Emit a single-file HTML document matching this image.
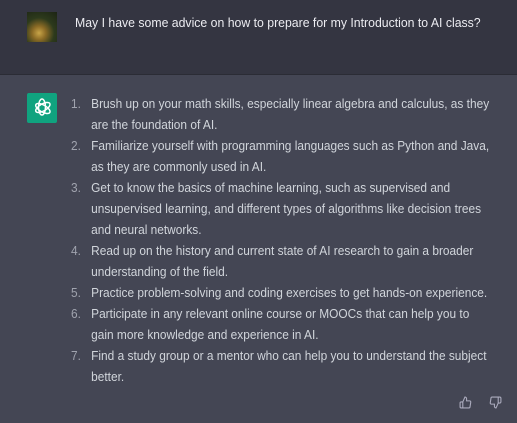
<!DOCTYPE html>
<html><head><meta charset="utf-8"><style>
html,body{margin:0;padding:0;width:517px;height:423px;overflow:hidden;font-family:"Liberation Sans",sans-serif;}
.top{position:absolute;left:0;top:0;width:517px;height:74px;background:#343541;border-bottom:1px solid #2b2c35;}
.bot{position:absolute;left:0;top:75px;width:517px;height:348px;background:#444654;}
.av{position:absolute;left:27px;top:12px;width:30px;height:30px;background:radial-gradient(circle at 40% 70%,#c9a548 0,#8a6a25 25%,#2d3a1c 55%,#1c2414 100%);}
.q{position:absolute;left:75px;top:13px;color:#ececf1;font-size:13.2px;line-height:20px;white-space:nowrap;transform:scaleX(0.93);transform-origin:0 0;}
.logo{position:absolute;left:27px;top:93px;width:30px;height:30px;background:#10a37f;border-radius:2px;}
.list{position:absolute;left:71px;top:93px;color:#d1d5db;font-size:13px;line-height:21px;transform:scaleX(0.915);transform-origin:0 0;}
.it{position:relative;padding-left:22px;white-space:nowrap;}
.it b{position:absolute;left:0;font-weight:normal;color:#a0a3ae;}
.ic{position:absolute;top:396px;}
</style></head><body>
<div class="top"></div>
<div class="av"></div>
<div class="q">May I have some advice on how to prepare for my Introduction to AI class?</div>
<div class="bot"></div>
<div class="logo"><svg width="30" height="30" viewBox="0 0 30 30" fill="none" stroke="#fff" stroke-width="1.5"><g transform="translate(15 15)"><ellipse rx="3.5" ry="8" transform="rotate(0) translate(0 -1)"/><ellipse rx="3.5" ry="8" transform="rotate(60) translate(0 -1)"/><ellipse rx="3.5" ry="8" transform="rotate(120) translate(0 -1)"/></g></svg></div>
<div class="list">
<div class="it"><b>1.</b>Brush up on your math skills, especially linear algebra and calculus, as they<br>are the foundation of AI.</div>
<div class="it"><b>2.</b>Familiarize yourself with programming languages such as Python and Java,<br>as they are commonly used in AI.</div>
<div class="it"><b>3.</b>Get to know the basics of machine learning, such as supervised and<br>unsupervised learning, and different types of algorithms like decision trees<br>and neural networks.</div>
<div class="it"><b>4.</b>Read up on the history and current state of AI research to gain a broader<br>understanding of the field.</div>
<div class="it"><b>5.</b>Practice problem-solving and coding exercises to get hands-on experience.</div>
<div class="it"><b>6.</b>Participate in any relevant online course or MOOCs that can help you to<br>gain more knowledge and experience in AI.</div>
<div class="it"><b>7.</b>Find a study group or a mentor who can help you to understand the subject<br>better.</div>
</div>
<svg class="ic" style="left:459px" width="13" height="13" viewBox="0 0 24 24" fill="none" stroke="#acacbe" stroke-width="2"><path d="M14 9V5a3 3 0 0 0-3-3l-4 9v11h11.3a2 2 0 0 0 2-1.7l1.4-9A2 2 0 0 0 19.7 9zM7 22H4a2 2 0 0 1-2-2v-7a2 2 0 0 1 2-2h3"/></svg>
<svg class="ic" style="left:489px" width="13" height="13" viewBox="0 0 24 24" fill="none" stroke="#acacbe" stroke-width="2"><path d="M10 15v4a3 3 0 0 0 3 3l4-9V2H5.7a2 2 0 0 0-2 1.7l-1.4 9a2 2 0 0 0 2 2.3zm7-13h2.7A2.3 2.3 0 0 1 22 4v7a2.3 2.3 0 0 1-2.3 2H17"/></svg>
</body></html>
